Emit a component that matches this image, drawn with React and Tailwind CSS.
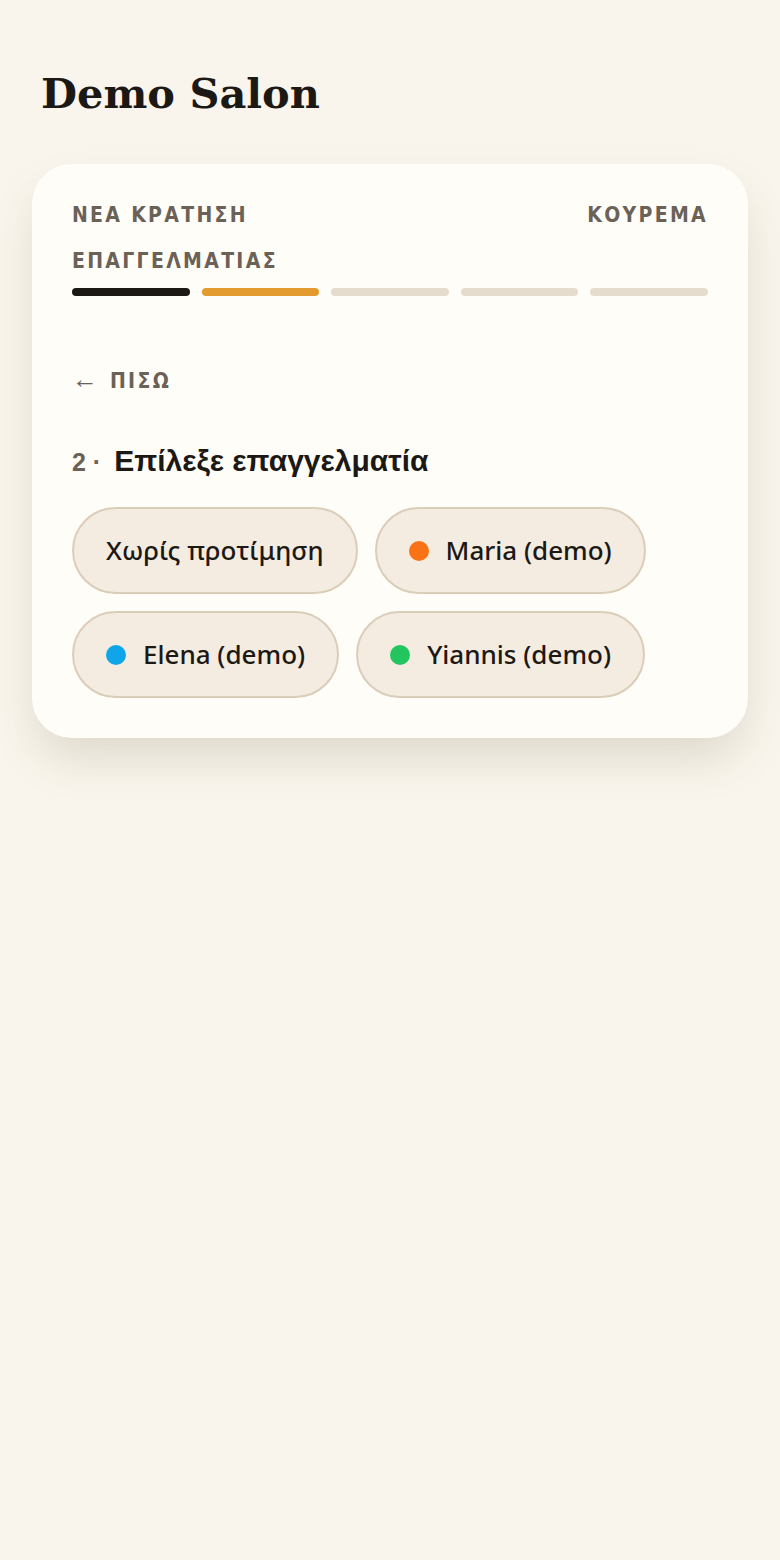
const steps = ["bg-[#1c1814]", "bg-[#e39b2f]", "bg-[#e6dccd]", "bg-[#e6dccd]", "bg-[#e6dccd]"];

const pros = [
  { name: "Χωρίς προτίμηση", dot: null },
  { name: "Maria (demo)", dot: "bg-[#f97316]" },
  { name: "Elena (demo)", dot: "bg-[#0ea5e9]" },
  { name: "Yiannis (demo)", dot: "bg-[#22c55e]" },
];

const label = "font-['Liberation_Sans_Narrow','DejaVu_Sans_Condensed',sans-serif] font-bold text-[21px] tracking-[0.11em] text-[#6b6157] leading-[26px]";

export default function App() {
  return (
    <div className="min-h-screen bg-[#f9f5ec] px-8 pt-[66px] pb-10">
      <h1 className="pl-[9px] font-['DejaVu_Serif',serif] font-bold text-[41.5px] leading-[56px] text-[#1c1814]">
        Demo Salon
      </h1>

      <div className="mt-[42px] rounded-[40px] bg-[#fffdf8] px-10 pt-[38px] pb-[40px] shadow-[0_24px_48px_-8px_rgba(90,70,40,0.18)]">
        <div className={`flex justify-between ${label}`}>
          <span>ΝΕΑ ΚΡΑΤΗΣΗ</span>
          <span>ΚΟΥΡΕΜΑ</span>
        </div>
        <div className={`mt-[20px] ${label}`}>ΕΠΑΓΓΕΛΜΑΤΙΑΣ</div>
        <div className="mt-[14px] flex gap-3">
          {steps.map((c, i) => (
            <div key={i} className={`h-2 flex-1 rounded-full ${c}`} />
          ))}
        </div>

        <button className={`mt-[72px] flex items-center gap-3 ${label}`}>
          <span className="-translate-y-[2px] font-['Liberation_Sans',sans-serif] font-normal text-[26px] tracking-normal leading-[26px]">←</span>
          ΠΙΣΩ
        </button>

        <h2 className="mt-[50px] flex items-baseline gap-[13px] font-['Liberation_Sans',sans-serif] leading-[34px]">
          <span className="text-[25px] font-semibold text-[#6b6157]">2 ·</span>
          <span className="text-[30px] font-bold text-[#1c1814]">Επίλεξε επαγγελματία</span>
        </h2>

        <div className="mt-[28px] flex flex-wrap gap-x-[17px] gap-y-[17px]">
          {pros.map((p) => (
            <button
              key={p.name}
              className="flex h-[87px] items-center gap-[17px] rounded-full border-2 border-[#dacdb9] bg-[#f4ece1] px-[32px] font-['Noto_Sans',sans-serif] text-[26px] font-medium text-[#1c1814]"
            >
              {p.dot && <span className={`h-5 w-5 shrink-0 rounded-full ${p.dot}`} />}
              <span>{p.name}</span>
            </button>
          ))}
        </div>
      </div>
    </div>
  );
}
